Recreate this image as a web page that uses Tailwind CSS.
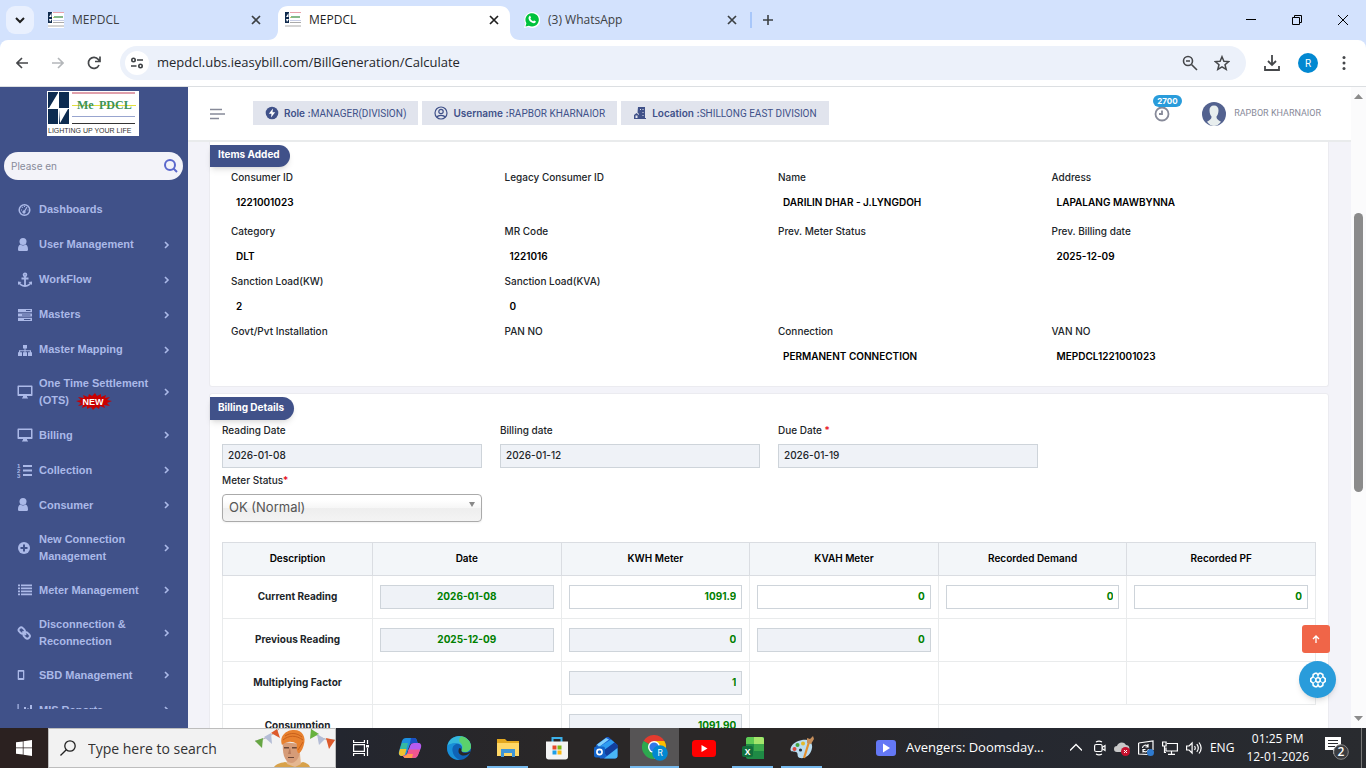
<!DOCTYPE html>
<html lang="en">
<head>
  <meta charset="UTF-8" />
  <meta name="viewport" content="width=device-width, initial-scale=1.0"/>
  <title>MEPDCL</title>
  <script src="https://cdn.jsdelivr.net/npm/@tailwindcss/browser@4"></script>
</head>
<body class="h-screen flex flex-col overflow-hidden bg-white font-['Open_Sans',sans-serif] text-[#1f1f1f]">

  <!-- shared icons -->
  <svg class="hidden">
    <symbol id="chev" viewBox="0 0 6 8"><path d="M1 1l3 3-3 3" fill="none" stroke="currentColor" stroke-width="1.6"/></symbol>
    <symbol id="close" viewBox="0 0 10 10"><path d="M1 1l8 8M9 1L1 9" fill="none" stroke="currentColor" stroke-width="1.7"/></symbol>
    <symbol id="favicon" viewBox="0 0 16 16">
      <path fill="#fff" d="M0 0h16v16H0z"/><path fill="#0f2a4d" d="M0 0h4v11H0z"/><path fill="#fff" d="M3.500 1v4H1zM1 7h3L2 10z"/>
      <path fill="#e9a3ab" d="M5 0h11v1H5z"/><path fill="#86b98a" d="M6 4h9v2H6z"/><path fill="#d9d45a" d="M5 5h1v1H5z"/><path fill="#c9cfe6" d="M5 8h11v1H5z"/><path fill="#aaa" d="M5 10h11v1H5z"/><path fill="#d4d4d4" d="M0 13h16v2H0z"/>
    </symbol>
    <symbol id="user" viewBox="0 0 16 16"><circle cx="6" cy="4.500" r="3.500"/><path d="M1 12.500C1 9.500 2 8 3.500 7.500c1.500 1.200 3.500 1.200 5 0C10 8 11 9.500 11 12.500c0 1-.8 1.500-1.500 1.500h-7C1.800 14 1 13.500 1 12.500z"/></symbol>
    <symbol id="desktop" viewBox="0 0 16 16"><path fill-rule="evenodd" d="M1.500 1.500h13c.8 0 1 .5 1 1v8.500c0 .6-.3 1-1 1H10v1.500h1v1H5v-1h1V12H1.500c-.7 0-1-.4-1-1V2.500c0-.6.3-1 1-1zM2 3v7h12V3z"/></symbol>
  </svg>

  <!-- tab strip -->
  <header class="h-10 shrink-0 flex items-start bg-[#d3e2fd] text-[12px] text-[#3c4043]">
    <button aria-label="Search tabs" class="mt-1.5 ml-1.5 size-7 rounded-[9px] bg-[#e9f0fe] flex items-center justify-center">
      <svg class="w-2.5 h-2" viewBox="0 0 10 8" fill="none" stroke="#1f1f1f" stroke-width="2"><path d="M1 2l4 4 4-4"/></svg>
    </button>
    <div class="ml-3.5 h-10 w-[220px] flex items-center">
      <svg class="size-4"><use href="#favicon"/></svg>
      <span class="ml-2 flex-1">MEPDCL</span>
      <button aria-label="Close tab"><svg class="size-2.5 mr-[7px]"><use href="#close"/></svg></button>
    </div>
    <div class="mt-1.5 h-[34px] w-[252px] flex bg-[linear-gradient(#fff,#fff)] bg-[length:232px_100%] bg-center bg-no-repeat">
      <svg class="self-end size-2.5 shrink-0" viewBox="0 0 10 10"><path fill="#fff" d="M10 0v10H0C6 10 10 6 10 0z"/></svg>
      <svg class="self-start size-2.5 shrink-0" viewBox="0 0 10 10"><path fill="#d3e2fd" d="M0 10V0h10C4 0 0 4 0 10z"/></svg>
      <div class="flex-1 h-7 flex items-center text-[#1f1f1f]">
        <svg class="size-4 -ml-[3px]"><use href="#favicon"/></svg>
        <span class="ml-2 flex-1">MEPDCL</span>
        <button aria-label="Close tab"><svg class="size-2.5 mr-px"><use href="#close"/></svg></button>
      </div>
      <svg class="self-start size-2.5 shrink-0" viewBox="0 0 10 10"><path fill="#d3e2fd" d="M10 10V0H0c6 0 10 4 10 10z"/></svg>
      <svg class="self-end size-2.5 shrink-0" viewBox="0 0 10 10"><path fill="#fff" d="M0 0v10h10C4 10 0 6 0 0z"/></svg>
    </div>
    <div class="ml-1 h-10 w-[220px] flex items-center">
      <svg class="size-4" viewBox="0 0 16 16"><path fill="#fff" d="M0 16l1.200-4.400A8 8 0 1 1 4.500 15z"/><path fill="#00c23c" d="M1.500 14.500l.9-3.200A6.700 6.700 0 1 1 4.900 13.700z"/><path fill="#fff" d="M5.300 4.200c.4-.5.9-.4 1.100 0l.6 1.400c.1.400-.5.8-.6 1.100.6 1.200 1.500 2 2.700 2.500.4-.1.700-.9 1.100-.8l1.500.8c.3.200.1 1-.3 1.400-1 .9-2.300.6-3.600 0C6 9.700 4.900 8.300 4.600 6.800c-.2-1 .1-2 .7-2.600z"/></svg>
      <span class="ml-2 flex-1">(3) WhatsApp</span>
      <button aria-label="Close tab"><svg class="size-2.5 mr-[7px]"><use href="#close"/></svg></button>
    </div>
    <div class="ml-1.5 mt-3 w-0.5 h-4 bg-[#a8c7fa]"></div>
    <button aria-label="New tab" class="ml-2.5 h-10"><svg class="size-3" viewBox="0 0 12 12" stroke="#3c4043" stroke-width="1.600"><path d="M6 1v10M1 6h10"/></svg></button>
    <div class="ml-auto h-10 flex text-black">
      <button aria-label="Minimize" class="w-[46px] flex items-center justify-center"><svg class="size-2.5" viewBox="0 0 10 10" stroke="currentColor"><path d="M0 4.500h10"/></svg></button>
      <button aria-label="Restore" class="w-[46px] flex items-center justify-center"><svg class="size-2.5" viewBox="0 0 10 10" fill="none" stroke="currentColor"><path d="M.5 2.500h7v7h-7zM2.500 2.500v-2h7v7h-2"/></svg></button>
      <button aria-label="Close" class="w-[46px] flex items-center justify-center"><svg class="size-2.5" viewBox="0 0 10 10" stroke="currentColor"><path d="M0 0l10 10M10 0L0 10"/></svg></button>
    </div>
  </header>

  <!-- toolbar -->
  <div class="shrink-0 bg-[#d3e2fd]">
    <div class="h-[47px] flex items-center rounded-t-[8px] bg-white border-b border-[#dcdfe2] text-[#45474a]">
      <button aria-label="Back" class="w-11 flex justify-center"><svg class="size-3" viewBox="0 0 12 12" fill="none" stroke="currentColor" stroke-width="1.600"><path d="M12 6H1.200M6 1L1 6l5 5"/></svg></button>
      <button aria-label="Forward" class="w-7 flex justify-center text-[#b4b7ba]"><svg class="size-3" viewBox="0 0 12 12" fill="none" stroke="currentColor" stroke-width="1.600"><path d="M0 6h10.800M6 1l5 5-5 5"/></svg></button>
      <button aria-label="Reload" class="w-11 flex justify-center"><svg class="size-3.5" viewBox="0 0 14 14" fill="none" stroke="currentColor" stroke-width="1.700"><path d="M12 9A5.500 5.500 0 1 1 11.300 3.500L13 5M13 .5V5.500H8"/></svg></button>
      <div class="ml-1 flex-1 h-[34px] rounded-full bg-[#ecf1fa] flex items-center pl-[5px] pr-4">
        <button aria-label="Site information" class="size-6 rounded-full bg-white flex items-center justify-center"><svg class="size-3" viewBox="0 0 12 12" fill="none" stroke="#3c4043" stroke-width="1.600"><circle cx="2.500" cy="3" r="1.700"/><path d="M6 3h6M0 9h5.500"/><circle cx="9.500" cy="9" r="1.700"/></svg></button>
        <input aria-label="Address" class="ml-2 flex-1 bg-transparent outline-none text-[13px] text-[#24262a]" value="mepdcl.ubs.ieasybill.com/BillGeneration/Calculate" />
        <button aria-label="Zoom"><svg class="size-4" viewBox="0 0 16 16" fill="none" stroke="currentColor" stroke-width="1.600"><circle cx="6" cy="6" r="4.500"/><path d="M9.500 9.500L15 15M4 6h4"/></svg></button>
        <button aria-label="Bookmark" class="ml-4"><svg class="size-4" viewBox="0 0 16 16" fill="none" stroke="currentColor" stroke-width="1.500"><path d="M8 1.700l1.900 4.500 4.800.4-3.700 3.100 1.200 4.700L8 11.900l-4.200 2.500L5 9.700 1.300 6.600l4.800-.4z"/></svg></button>
      </div>
      <button aria-label="Downloads" class="ml-[18px]"><svg class="size-4" viewBox="0 0 16 16" fill="none" stroke="currentColor" stroke-width="1.800"><path d="M8 0v9.500M4 6l4 4 4-4M1 11v4h14v-4"/></svg></button>
      <button aria-label="Profile" class="ml-[18px] size-5 rounded-full bg-[#0288d1] text-[10px] text-white font-['Roboto',sans-serif]">R</button>
      <button aria-label="Menu" class="ml-6 mr-5"><svg class="w-1 h-4" viewBox="0 0 4 16" fill="currentColor"><circle cx="2" cy="2.500" r="1.500"/><circle cx="2" cy="8" r="1.500"/><circle cx="2" cy="13.500" r="1.500"/></svg></button>
    </div>
  </div>

  <!-- web page -->
  <div class="relative flex-1 min-h-0 flex font-['Inter',sans-serif]">

    <aside class="w-[188px] shrink-0 bg-[#405189] flex flex-col pt-1 pb-[19px]">
      <a href="#" class="ml-[47px] w-[92px] h-[45px] shrink-0 bg-white">
        <svg class="w-full h-full" viewBox="0 0 92 45">
          <path fill="#0d2b50" d="M1 1h21v32H1z"/><path fill="#fff" d="M11 2v15H2zM12 18h9L13 32zM1 17h21v1H1z"/><path fill="#fff" d="M11 1h1v32h-1z"/>
          <path fill="#e0a0ac" d="M25 1h63v2H25z"/><path fill="#e2df3c" d="M25 14h64v1H25z"/><path fill="#98a5cf" d="M25 25h63v1H25z"/><path fill="#333" d="M25 32h63v1H25z"/>
          <text x="30" y="18" font-family="Liberation Serif" font-weight="700" font-size="12" fill="#3c9358">Me</text>
          <text x="52" y="18" font-family="Liberation Serif" font-weight="700" font-size="12" fill="#3c9358">PDCL</text>
          <text x="1" y="42" font-family="Liberation Sans" font-size="7" fill="#333">LIGHTING UP YOUR LIFE</text>
        </svg>
      </a>
      <label class="ml-1 mt-4 mr-[5px] h-7 shrink-0 rounded-full bg-[#f3f3f9] flex items-center pl-[7px] pr-[5px]">
        <input aria-label="Search menu" placeholder="Please en" class="min-w-0 flex-1 bg-transparent outline-none text-[10px] placeholder:text-[#878a99]" />
        <svg class="size-3.5" viewBox="0 0 14 14" fill="none" stroke="#5b68cc" stroke-width="2"><circle cx="6" cy="6" r="5"/><path d="M9.500 9.500L13 13"/></svg>
      </label>

      <nav class="mt-3 min-h-0 flex-1 overflow-hidden font-['Liberation_Sans',sans-serif] text-[11px] leading-[17px] font-bold text-[#abb9e8]">
        <a href="#" class="flex items-center min-h-[35px] py-2 pl-[17px]">
          <svg class="size-4" viewBox="0 0 16 16" fill="none" stroke="currentColor"><circle cx="7.500" cy="8" r="5.300" stroke-width="1.500"/><path d="M7 10l3-5M4 8h1M5 5l.7.7M10.500 8h1M7.500 4v1" stroke-width="1.200"/><circle cx="7" cy="10" r="1.200" fill="currentColor"/></svg>
          <span class="ml-1.5 w-[125px]">Dashboards</span>
        </a>
        <a href="#" class="flex items-center min-h-[35px] py-2 pl-[17px]">
          <svg class="size-4" fill="currentColor"><use href="#user"/></svg>
          <span class="ml-1.5 w-[125px]">User Management</span>
          <svg class="w-1.5 h-2"><use href="#chev"/></svg>
        </a>
        <a href="#" class="flex items-center min-h-[35px] py-2 pl-[17px]">
          <svg class="size-4" viewBox="0 0 16 16" fill="none" stroke="currentColor" stroke-width="1.800"><circle cx="8" cy="2.800" r="1.400"/><path d="M8 4v10M4.500 6.500h7M2 10.500c1 2.300 3.500 3.300 6 3.500 2.500-.2 5-1.200 6-3.500"/><path d="M1 13V9.500L4.500 10zM15 13V9.500L11.500 10z" fill="currentColor" stroke="none"/></svg>
          <span class="ml-1.5 w-[125px]">WorkFlow</span>
          <svg class="w-1.5 h-2"><use href="#chev"/></svg>
        </a>
        <a href="#" class="flex items-center min-h-[35px] py-2 pl-[17px]">
          <svg class="size-4" viewBox="0 0 16 16"><path fill="currentColor" d="M1 2h14v3.200H1zM1 6.400h14v3.200H1zM1 10.800h14V14H1z"/><path fill="#405189" d="M9 3h4.500v1H9zM5 7.500h8.500v1H5zM7 12h6.500v1H7z"/></svg>
          <span class="ml-1.5 w-[125px]">Masters</span>
          <svg class="w-1.5 h-2"><use href="#chev"/></svg>
        </a>
        <a href="#" class="flex items-center min-h-[35px] py-2 pl-[17px]">
          <svg class="size-4" viewBox="0 0 16 16" fill="currentColor"><path d="M6 3h4v3.500H8.500V8.200H14v2h1V14h-4v-3.800h1.800V9.300H8.500v.9H10V14H6v-3.800h1.500v-.9H3.200v.9H5V14H1v-3.800h1v-2h5.500V6.500H6z"/></svg>
          <span class="ml-1.5 w-[125px]">Master Mapping</span>
          <svg class="w-1.5 h-2"><use href="#chev"/></svg>
        </a>
        <a href="#" class="flex items-center min-h-[35px] py-2 pl-[17px]">
          <svg class="size-4" fill="currentColor"><use href="#desktop"/></svg>
          <span class="ml-1.5 w-[125px]">One Time Settlement (OTS)
            <svg class="inline w-9 h-[17px] ml-1" viewBox="0 0 36 17"><path fill="#c80000" d="M0 8l5-1-3-3 6 1-1-3 5 2 1-3 3 2 3-3 2 3 4-2v3l5-2-1 3 5-1-3 3 5 1-5 2 3 3-6-1 1 3-5-2-1 3-3-2-3 3-2-3-4 2v-3l-5 2 1-3-5 1 3-3z"/><text x="17" y="11.500" text-anchor="middle" font-size="9" fill="#fff">NEW</text></svg>
          </span>
          <svg class="w-1.5 h-2"><use href="#chev"/></svg>
        </a>
        <a href="#" class="flex items-center min-h-[35px] py-2 pl-[17px]">
          <svg class="size-4" fill="currentColor"><use href="#desktop"/></svg>
          <span class="ml-1.5 w-[125px]">Billing</span>
          <svg class="w-1.5 h-2"><use href="#chev"/></svg>
        </a>
        <a href="#" class="flex items-center min-h-[35px] py-2 pl-[17px]">
          <svg class="size-4" viewBox="0 0 16 16" fill="currentColor"><path d="M6 3h9v2H6zM6 7.500h9v2H6zM6 12h9v2H6z"/><text x="0" y="6" font-size="6">1</text><text x="0" y="11" font-size="6">2</text><text x="0" y="16" font-size="6">3</text></svg>
          <span class="ml-1.5 w-[125px]">Collection</span>
          <svg class="w-1.5 h-2"><use href="#chev"/></svg>
        </a>
        <a href="#" class="flex items-center min-h-[35px] py-2 pl-[17px]">
          <svg class="size-4" fill="currentColor"><use href="#user"/></svg>
          <span class="ml-1.5 w-[125px]">Consumer</span>
          <svg class="w-1.5 h-2"><use href="#chev"/></svg>
        </a>
        <a href="#" class="flex items-center min-h-[35px] py-2 pl-[17px]">
          <svg class="size-4" viewBox="0 0 16 16"><circle cx="7" cy="8" r="6" fill="currentColor"/><path d="M7 4.500v7M3.500 8h7" stroke="#405189" stroke-width="2"/></svg>
          <span class="ml-1.5 w-[125px]">New Connection Management</span>
          <svg class="w-1.5 h-2"><use href="#chev"/></svg>
        </a>
        <a href="#" class="flex items-center min-h-[35px] py-2 pl-[17px]">
          <svg class="size-4" viewBox="0 0 16 16" fill="currentColor"><path d="M1 2.500h2v1.700H1zM4 2.500h11v1.700H4zM1 5.500h2v1.700H1zM4 5.500h11v1.700H4zM1 8.500h2v1.700H1zM4 8.500h11v1.700H4zM1 11.500h2v1.700H1zM4 11.500h11v1.700H4z"/></svg>
          <span class="ml-1.5 w-[125px]">Meter Management</span>
          <svg class="w-1.5 h-2"><use href="#chev"/></svg>
        </a>
        <a href="#" class="flex items-center min-h-[35px] py-2 pl-[17px]">
          <svg class="size-4" viewBox="0 0 16 16" fill="none" stroke="currentColor" stroke-width="1.900"><rect x="1.500" y="3" width="6.500" height="5" rx="2.300" transform="rotate(45 4.700 5.500)"/><rect x="6.500" y="8" width="6.500" height="5" rx="2.300" transform="rotate(45 9.700 10.500)"/><path d="M5.500 6.300l3.500 3.500"/></svg>
          <span class="ml-1.5 w-[125px]">Disconnection &amp; Reconnection</span>
          <svg class="w-1.5 h-2"><use href="#chev"/></svg>
        </a>
        <a href="#" class="flex items-center min-h-[35px] py-2 pl-[17px]">
          <svg class="size-4" viewBox="0 0 16 16" fill="currentColor"><path fill-rule="evenodd" d="M1.500 3h5c.5 0 .8.300.8.800v8.400c0 .5-.3.800-.8.800h-5c-.5 0-.8-.3-.8-.8V3.800c0-.5.300-.8.800-.8zM2 4.700v6.300h4V4.700z"/></svg>
          <span class="ml-1.5 w-[125px]">SBD Management</span>
          <svg class="w-1.5 h-2"><use href="#chev"/></svg>
        </a>
        <a href="#" class="flex items-center min-h-[35px] py-2 pl-[17px]">
          <svg class="size-4" viewBox="0 0 16 16" fill="currentColor"><path d="M.5 2h1.200v11H16v1.200H.5zM4 8h2v4H4zM7 5h2v7H7zM10 6.500h2V12h-2zM13 3h2v9h-2z"/></svg>
          <span class="ml-1.5 w-[125px]">MIS Reports</span>
          <svg class="w-1.5 h-2"><use href="#chev"/></svg>
        </a>
      </nav>
    </aside>

    <div class="flex-1 min-w-0 flex flex-col bg-[#f3f3f9]">
      <div class="h-[55px] shrink-0 flex items-center bg-white border-b-2 border-[#e9ebec] pl-[22px] pr-[30px] font-['Roboto',sans-serif] text-[10px] text-[#405189]">
        <button aria-label="Toggle menu"><svg class="w-[15px] h-3" viewBox="0 0 15 12" stroke="#878a99" stroke-width="1.300"><path d="M0 1.500h12M0 6h15M0 10.500h9"/></svg></button>
        <div class="ml-7 flex gap-1 h-[25px] pb-px">
          <div class="flex items-center bg-[#e1e4ed] px-3">
            <svg class="size-3.5 mr-[5px]" viewBox="0 0 14 14"><circle cx="7" cy="7" r="6.300" fill="currentColor"/><path fill="#fff" d="M8 2.500L3.800 7.800h2.700L6 11.500l4.200-5.300H7.500z"/></svg>
            <b class="font-['Inter',sans-serif] font-semibold">Role :</b>MANAGER(DIVISION)
          </div>
          <div class="flex items-center bg-[#e1e4ed] px-3">
            <svg class="size-3.5 mr-[5px]" viewBox="0 0 14 14" fill="none" stroke="currentColor" stroke-width="1.200"><circle cx="7" cy="7" r="6"/><circle cx="7" cy="5.500" r="2.200"/><path d="M3 11.300c1-2.600 7-2.600 8 0"/></svg>
            <b class="font-['Inter',sans-serif] font-semibold">Username :</b>RAPBOR KHARNAIOR
          </div>
          <div class="flex items-center bg-[#e1e4ed] px-3">
            <svg class="size-3.5 mr-[5px]" viewBox="0 0 14 14"><path fill="currentColor" d="M5 1h7v12H6V8L4.500 6.500zM13 12v1H1v-1zM1 13V9l2.500-2L6 9v4z"/><path fill="#e1e4ed" d="M7 3h1v1H7zM9.500 3h1v1h-1zM9.500 6h1v1h-1zM9.500 9h1v1h-1zM2.500 9.500h2V12h-2z"/></svg>
            <b class="font-['Inter',sans-serif] font-semibold">Location :</b>SHILLONG EAST DIVISION
          </div>
        </div>
        <button aria-label="Notifications" class="ml-auto relative mr-8 text-[#878a99]">
          <svg class="size-4" viewBox="0 0 16 16" fill="none" stroke="currentColor" stroke-width="1.800"><circle cx="8" cy="8" r="6.500"/><path d="M8 4.500V8H5"/></svg>
          <span class="absolute -top-[11px] -left-px h-3 px-1 rounded-full bg-[#299cdb] text-white font-['Inter',sans-serif] text-[8px] leading-3 font-bold">2700</span>
        </button>
        <svg class="size-6" viewBox="0 0 24 24"><circle cx="12" cy="12" r="12" fill="#53628f"/><path fill="#e8eeee" d="M12 3.500c3 0 4.700 2 4.500 5-.1 3-1 5-2 6 0 2 .5 3 4.500 5.200C17 22.500 14.500 24 12 24s-5-1.500-7-4.300c4-2.200 4.500-3.200 4.500-5.200-1-1-1.900-3-2-6-.2-3 1.500-5 4.500-5z"/></svg>
        <span class="ml-2 text-[9px] text-[#878a99]">RAPBOR KHARNAIOR</span>
      </div>

      <main class="flex-1 min-h-0 overflow-hidden pl-[21px] pr-[22px] text-[10px] leading-4 text-[#212529]">
        <section class="h-[245px] bg-white border border-t-0 border-[#ebebf0] rounded-b-[3px] pt-[3px]">
          <h2 class="w-max h-[22px] px-2 pr-2.5 rounded-r-full bg-[#405189] text-white font-bold leading-[19px] shadow-md">Items Added</h2>
          <div class="mx-3 mt-0.5 grid grid-cols-4 gap-y-[9px] font-medium [&>div]:pl-[9px] [&_p]:h-4 [&_p]:mt-[9px] [&_p]:pl-[5px] [&_p]:font-semibold [&_p]:text-black">
            <div class="mb-1">Consumer ID<p>1221001023</p></div>
            <div class="mb-1">Legacy Consumer ID<p></p></div>
            <div class="mb-1">Name<p>DARILIN DHAR - J.LYNGDOH</p></div>
            <div class="mb-1">Address<p>LAPALANG MAWBYNNA</p></div>
            <div>Category<p>DLT</p></div>
            <div>MR Code<p>1221016</p></div>
            <div>Prev. Meter Status<p></p></div>
            <div>Prev. Billing date<p>2025-12-09</p></div>
            <div>Sanction Load(KW)<p>2</p></div>
            <div>Sanction Load(KVA)<p>0</p></div>
            <div></div>
            <div></div>
            <div>Govt/Pvt Installation<p></p></div>
            <div>PAN NO<p></p></div>
            <div>Connection<p>PERMANENT CONNECTION</p></div>
            <div>VAN NO<p>MEPDCL1221001023</p></div>
          </div>
        </section>

        <section class="mt-1.5 bg-white border border-[#ebebf0] rounded-[3px] pt-[3px]">
          <h2 class="w-max h-[23px] px-2 pr-2.5 rounded-r-full bg-[#405189] text-white font-bold leading-[21px] shadow-md">Billing Details</h2>
          <div class="mx-3 mt-0.5 grid grid-cols-4 gap-x-[18px] gap-y-1 font-medium [&_label]:block [&_label]:mb-1.5 [&_input]:block [&_input]:w-full [&_input]:h-6 [&_input]:px-[5px] [&_input]:pb-0.5 [&_input]:border [&_input]:border-[#ced4da] [&_input]:bg-[#eff2f7]">
            <div><label for="readingDate">Reading Date</label><input id="readingDate" value="2026-01-08" readonly /></div>
            <div><label for="billingDate">Billing date</label><input id="billingDate" value="2026-01-12" readonly /></div>
            <div><label for="dueDate">Due Date <span class="text-red-600">*</span></label><input id="dueDate" value="2026-01-19" readonly /></div>
            <div class="col-start-1">
              <label for="meterStatus">Meter Status<span class="text-red-600">*</span></label>
              <div class="relative">
                <select id="meterStatus" class="appearance-none w-full h-7 pl-1.5 pb-0.5 rounded-[4px] border border-[#aaa] bg-[linear-gradient(#fff_20%,#f6f6f6_50%,#eee_52%,#f4f4f4)] shadow-xs font-normal text-[13px] text-[#555]">
                  <option>OK (Normal)</option>
                </select>
                <svg class="absolute right-[7px] top-2 w-1.5 h-[5px] pointer-events-none" viewBox="0 0 6 5"><path fill="#888" d="M0 0h6L3 5z"/></svg>
              </div>
            </div>
          </div>

          <div class="mx-3 mt-5">
            <table class="w-full table-fixed border-collapse text-center [&_th]:border [&_th]:pb-0.5 [&_td]:border [&_td]:border-[#e9ebec] [&_td]:px-[7px] [&_tbody_tr]:h-[43px] [&_tbody_th]:border-[#e9ebec] [&_tbody_th]:font-bold [&_input]:block [&_input]:w-full [&_input]:h-6 [&_input]:px-[5px] [&_input]:pb-0.5 [&_input]:border [&_input]:border-[#ced4da] [&_input]:text-right [&_input]:font-bold [&_input]:text-[#008000] [&_input]:read-only:bg-[#eff2f7]">
              <thead>
                <tr class="h-[33px] bg-[#f3f6f9] text-black [&_th]:border-[#dadde2] [&_th]:font-semibold">
                  <th class="w-[150px]">Description</th>
                  <th>Date</th>
                  <th>KWH Meter</th>
                  <th>KVAH Meter</th>
                  <th>Recorded Demand</th>
                  <th>Recorded PF</th>
                </tr>
              </thead>
              <tbody>
                <tr>
                  <th>Current Reading</th>
                  <td><input aria-label="Current date" class="!text-center" value="2026-01-08" readonly /></td>
                  <td><input aria-label="Current KWH" value="1091.9" /></td>
                  <td><input aria-label="Current KVAH" value="0" /></td>
                  <td><input aria-label="Recorded demand" value="0" /></td>
                  <td><input aria-label="Recorded PF" value="0" /></td>
                </tr>
                <tr>
                  <th>Previous Reading</th>
                  <td><input aria-label="Previous date" class="!text-center" value="2025-12-09" readonly /></td>
                  <td><input aria-label="Previous KWH" value="0" readonly /></td>
                  <td><input aria-label="Previous KVAH" value="0" readonly /></td>
                  <td></td>
                  <td></td>
                </tr>
                <tr>
                  <th>Multiplying Factor</th>
                  <td></td>
                  <td><input aria-label="Multiplying factor" value="1" readonly /></td>
                  <td></td>
                  <td></td>
                  <td></td>
                </tr>
                <tr>
                  <th>Consumption</th>
                  <td></td>
                  <td><input aria-label="Consumption KWH" value="1091.90" readonly /></td>
                  <td></td>
                </tr>
              </tbody>
            </table>
          </div>
        </section>
      </main>
    </div>

    <!-- scrollbar -->
    <div class="w-[15px] shrink-0 bg-[#fbfbfc] flex flex-col items-center py-[7px]">
      <svg class="w-[9px] h-[5px]" viewBox="0 0 9 5"><path fill="#8b8b8b" d="M4.500 0L9 5H0z"/></svg>
      <div class="grow-[114]"></div>
      <div class="grow-[279] w-[9px] rounded-full bg-[#8b8b8b]"></div>
      <div class="grow-[224]"></div>
      <svg class="w-[9px] h-[5px]" viewBox="0 0 9 5"><path fill="#8b8b8b" d="M0 0h9L4.500 5z"/></svg>
    </div>

    <!-- floating buttons -->
    <div class="absolute right-[30px] bottom-[30px] flex flex-col items-end gap-2">
      <button aria-label="Back to top" class="mr-1.5 size-7 rounded-[3px] bg-[#f06548] flex items-center justify-center"><svg class="size-2" viewBox="0 0 8 8" fill="none" stroke="#fff" stroke-width="1.300"><path d="M4 8V1M1 4l3-3 3 3"/></svg></button>
      <button aria-label="Settings" class="size-[37px] rounded-full bg-[#299cdb] shadow-md flex items-center justify-center">
        <svg class="size-4" viewBox="0 0 16 16" fill="none" stroke="#fff" stroke-width="1.600"><path d="M5.200 1.300h1.500L8 3l1.300-1.700h1.500l2 1.200.2 2.300 2.200 1.800v2.800L13 11.200l-.2 2.300-2 1.200H9.300L8 13l-1.300 1.700H5.200l-2-1.200-.2-2.300L.8 9.400V6.600L3 4.800l.2-2.300z"/><circle cx="8" cy="8" r="2.200"/><path d="M8 3v3M8 10v3M3 4.800L6 7M10 9l3 2.200M13 4.800L10 7M6 9l-3 2.200" stroke-width="1"/></svg>
      </button>
    </div>
  </div>

  <!-- taskbar -->
  <footer class="h-10 shrink-0 flex bg-[linear-gradient(90deg,#2b2120_0,#2b2120_48px,#23262f_340px,#2a2727_560px,#2a2727_800px,#252830_1000px,#292b2f_1366px)] text-white">
    <button aria-label="Start" class="w-12 flex items-center justify-center"><svg class="size-4" viewBox="0 0 16 16" fill="#fff"><path d="M0 2.300L6.800 1.400V7.600H0zM7.500 1.300L16 0v7.600H7.500zM0 8.300h6.800v6.300L0 13.700zM7.500 8.300H16V16l-8.500-1.300z"/></svg></button>
    <label class="w-72 flex items-center bg-[#f2f2f2] border border-[#bdbdbd] pl-[11px]">
      <svg class="size-4" viewBox="0 0 16 16" fill="none" stroke="#222" stroke-width="1.300"><circle cx="10" cy="6" r="5.200"/><path d="M6.300 9.700L.5 15.500"/></svg>
      <input placeholder="Type here to search" aria-label="Search" class="ml-3 w-[150px] bg-transparent outline-none text-[14px] placeholder:text-[#333]" />
      <svg class="ml-[17px] w-20 h-[38px]" viewBox="0 0 80 38">
        <path d="M0 12Q14 10 24 0M56 0Q64 12 80 11" fill="none" stroke="#999" stroke-width=".7"/>
        <path fill="#67a644" d="M0 12l8-3-1 10z"/><path fill="#b4bdd6" d="M9 8l7-4 1 11z"/><path fill="#dd5a2b" d="M16 4l6-4 3 9z"/><path fill="#67b23e" d="M56 0l8 5-9 5z"/><path fill="#b4bdd6" d="M62 5l8 5-6 6z"/><path fill="#dd5a2b" d="M71 9l9 2-6 9z"/>
        <path fill="#d8a24a" d="M19 38c3-4 7-4 11-5l10 3 8-3c3 1 6 2 7 5z"/><path fill="#e5b791" d="M31 25h14l1 10-6 3-8-3z"/>
        <path fill="#d69c78" d="M28 13c-1 10 1 20 8 21 6 0 10-8 10-19z"/><path fill="#6b4738" d="M29 18h5v1.500h-5zM37 18h6v1.500h-6zM33 28h6v1h-6z"/><path fill="#b97c5d" d="M35 18l-2 7h3z"/>
        <path fill="#e8812f" d="M27 16C24 7 31 1 39 1c9 0 12 8 10 14-1 5-4 10-6 9-2-4-1-6-1-9-5-3-10-3-15 1z"/><path d="M28 11c6-5 13-5 20 0M30 7c6-4 12-3 17 1M43 21l5-8" stroke="#c9601c" fill="none"/>
      </svg>
    </label>
    <div class="flex [&>button]:flex [&>button]:items-center [&>button]:justify-center [&>button]:w-[49px] [&>button]:border-b-2 [&>button]:border-transparent [&>button]:pt-0.5">
      <button aria-label="Task view"><svg class="size-4" viewBox="0 0 16 16" fill="none" stroke="#fff" stroke-width="1.200"><path d="M.6 0v2.500h10.800V0M.6 16v-2.500h10.800V16M.6 4.600h10.800v6.800H.6zM14.500 0v4M14.500 8v8"/><path d="M13 5h3v2.500h-3z" fill="#fff" stroke="none"/></svg></button>
      <button aria-label="Copilot"><svg class="size-6" viewBox="0 0 24 24"><path fill="#1d8fe0" d="M8 2h8c2 0 2.500 1 3 3l.7 2H15c-2 0-3 1-3.700 3L9 17c-.7 2-1.500 3-3.500 3H4c-3 0-3.700-2-2.900-5L4 5c.8-2 2-3 4-3z"/><path fill="#35b9a0" d="M4 7h6L8.500 13H2z"/><path fill="#f0c22f" d="M2 13h6.500l-1.300 5c-.4 1-1 2-2 2H4c-2.700 0-3.500-2-2.900-4z"/><path fill="#1a4fc4" d="M13 2h3c2 0 2.500 1 3 3l.7 2H15c-2 0-3 1-3.500 2z"/><path fill="#b45cf0" d="M16 22H8c-2 0-2.500-1-3-3l1 1c2 0 3-1 3.600-3L12 10c.6-2 2-3 4-3h4c3 0 3.700 2 2.900 5L20 19c-.8 2-2 3-4 3z"/><path fill="#f0568f" d="M9.500 17l.9-3.500H22L20 19c-.8 2-2 3-4 3H8c-2 0-2.500-1-3-3 2 1 3.700 0 4.500-2z"/><path fill="#ff9a50" d="M9 18h6l-1 4H8c-1.500 0-2.300-.7-2.700-2C7 20.200 8 19.600 9 18z"/></svg></button>
      <button aria-label="Edge"><svg class="size-6" viewBox="0 0 24 24"><circle cx="12" cy="12" r="12" fill="#0f63b6"/><path fill="#35b8dc" d="M.3 10C1.500 3.500 7 0 12 0c7 0 12 5 12 10.500C24 14 21 16 18 16c-2.500 0-4-1-3.500-2C16 12 15 8 10 7.500 5 7 1.500 9 .3 10z"/><path fill="#5bd16c" d="M14 .2c6 1 10 5.300 10 10.300C24 14 21 16 18 16c-2.500 0-4-1-3.500-2 2-3 1-6-2-8C12 4 12 2 14 .2z"/><path fill="#1990d8" d="M.3 10C2 7.800 6 6.800 10 7.500 6 9 5 12 5.500 15c.5 4 3 7 7 9C4 24-1 17 .3 10z"/><path fill="#2a2727" d="M14.500 14c-.8 1.500 1.500 3.400 5 2.800 1.500-.3 2.800-.8 3.500-1.200l.3 1c-1.500 2-6 4-9.300 2.400-3-1.500-3-5-1.500-7 1.500.3 2 1.300 2 2z"/></svg></button>
      <button aria-label="File Explorer" class="!border-[#76b9ed] !w-[41px] mx-1"><svg class="w-[22px] h-5" viewBox="0 0 22 20"><path fill="#e3a81f" d="M0 1h8l2 2h12v6H0z"/><path fill="#ffd766" d="M0 5h22v13H0z"/><path fill="#3f95d6" d="M4 11h14v8h-3v-4H7v4H4z"/></svg></button>
      <button aria-label="Store"><svg class="size-6" viewBox="0 0 24 24"><path d="M7.500 6V2h9v4" fill="none" stroke="#3cb1ea" stroke-width="2"/><path fill="#f4f4f4" d="M1 5.500h22V21c0 1.500-1 2.500-2.500 2.500h-17C2 23.500 1 22.500 1 21z"/><path fill="#e84a2a" d="M7.500 9.500h4v4h-4z"/><path fill="#7fb813" d="M12.500 9.500h4v4h-4z"/><path fill="#1e9fe8" d="M7.500 14.500h4v4h-4z"/><path fill="#fbb813" d="M12.500 14.500h4v4h-4z"/></svg></button>
      <button aria-label="Outlook"><svg class="size-6" viewBox="0 0 24 24"><path fill="#1a5fd0" d="M2 9L12 1.500c1-.6 2-.6 3 0L23.500 9v11c0 1.500-1 2.500-2.500 2.500H6z"/><path fill="#7fd0fb" d="M3 8.500L12 2l3 1.500L5 11z"/><path fill="#2e9cf0" d="M5 11L17 3.500l3.500 3L9 15z"/><path fill="#123f9e" d="M9 15L20.500 6.500 23.500 9v3L13 20z"/><path fill="#49b6f6" d="M10 22.500L23.500 12v8c0 1.500-1 2.500-2.500 2.500z"/><rect x="0" y="10.500" width="11" height="11" rx="2" fill="#1263c8"/><circle cx="5.500" cy="16" r="2.600" fill="none" stroke="#fff" stroke-width="1.600"/></svg></button>
      <button aria-label="Chrome" class="!border-[#76b9ed] bg-[#565455]"><svg class="size-[26px]" viewBox="0 0 26 26"><path fill="#e33b2e" d="M12 12L1.600 6A12 12 0 0 1 22.400 6z"/><path fill="#2da94f" d="M12 12L1.600 6A12 12 0 0 0 12 24l4-8z"/><path fill="#fdbd00" d="M12 6h10.400A12 12 0 0 1 12 24l5-9z"/><circle cx="12" cy="12" r="6" fill="#fff"/><circle cx="12" cy="12" r="4.600" fill="#3079e8"/><circle cx="18" cy="18" r="7.800" fill="#0288d1"/><text x="18" y="21" font-family="Roboto" font-size="8.500" text-anchor="middle" fill="#fff">R</text></svg></button>
      <button aria-label="YouTube"><svg class="w-6 h-[17px]" viewBox="0 0 24 17"><rect width="24" height="17" rx="3.500" fill="#f00"/><path fill="#fff" d="M9.500 5v7l6-3.500z"/></svg></button>
      <button aria-label="Excel" class="!border-[#76b9ed] !w-[41px] mx-1"><svg class="size-[22px]" viewBox="0 0 22 22"><path fill="#1f8a45" d="M4 2c0-1 .8-2 2-2h16v22H6c-1.200 0-2-1-2-2z"/><path fill="#5ecb54" d="M6 0h6v7H4V2c0-1 1-2 2-2z"/><path fill="#a5e66c" d="M12 0h8c1 0 2 1 2 2v5H12z"/><path fill="#3da94b" d="M12 7h10v7H12z"/><rect y="9" width="11" height="11" rx="2" fill="#126e3b"/><text x="5.500" y="17.500" font-size="8.500" font-weight="700" text-anchor="middle" fill="#fff">X</text></svg></button>
      <button aria-label="Paint" class="!border-[#76b9ed] !w-[41px] mx-1"><svg class="size-6" viewBox="0 0 24 24"><path fill="#b9dcf0" d="M12 4c6-1.500 11 2 10 8-1 7-7 11-12 10-4-1-1-5-4-6S-.5 16 .7 12C2 7.500 7 5 12 4z"/><circle cx="4.500" cy="13" r="2" fill="#dc4b3e"/><circle cx="7.500" cy="9" r="2" fill="#44a340"/><circle cx="13" cy="7.500" r="2" fill="#e3b92a"/><circle cx="10.500" cy="14" r="1.600" fill="#27303a"/><path stroke="#e48f2d" stroke-width="2.200" d="M19 6l-5 16"/><path fill="#c58e5b" d="M17 2l3 1 3-3 1 3-3 5-4-1z"/></svg></button>
    </div>
    <button class="ml-auto flex items-center gap-2.5 text-[13px]">
      <svg class="w-5 h-4" viewBox="0 0 20 16"><rect width="20" height="16" rx="3" fill="#6478f5"/><path fill="#fff" d="M7 3.500v9l7-4.500z"/></svg>
      Avengers: Doomsday...
    </button>
    <div class="ml-[26px] flex items-center gap-2 text-[12px]">
      <svg class="w-3 h-4" viewBox="0 0 12 16" fill="none" stroke="#fff" stroke-width="1.300"><path d="M0 10.500l6-6 6 6"/></svg>
      <svg class="ml-1 w-3 h-4" viewBox="0 0 12 16" fill="none" stroke="#fff" stroke-width="1.200"><rect x=".6" y="4.500" width="7.500" height="7" rx="1.500"/><path d="M8 7.500l3-2v5l-3-2M2 2Q5 .3 8 2M2 14q3 1.700 6 0"/></svg>
      <svg class="w-4 h-4" viewBox="0 0 16 16"><path fill="#c8c8c8" d="M3 12a3 3 0 0 1 0-6c1-4 7-5 9-1 3 0 4 3 3 5s-3 2-4 2z"/><circle cx="11.500" cy="11.500" r="4.500" fill="#c8102e"/><path d="M10 10l3 3M13 10l-3 3" stroke="#fff"/></svg>
      <svg class="w-4 h-4" viewBox="0 0 16 16" fill="none" stroke="#fff" stroke-width="1.200"><path d="M.6 3L15 1v9M.6 3v11l9 .5"/><path d="M4.500 8a3 3 0 0 1 5.500-1.500M10 4v3H7.500M10.500 9A3 3 0 0 1 5 10.500M5 12.500v-3h2.500"/><circle cx="12.500" cy="12.500" r="3.500" fill="#2f7bd0" stroke="none"/></svg>
      <svg class="w-4 h-4" viewBox="0 0 16 16" fill="none" stroke="#fff" stroke-width="1.200"><path d="M5 3.500h10.400v7.500H4V7.500M9.500 11v3M6 14.400h7M.6 2h3.500v4H.6zM2.500 6v6.500H4"/></svg>
      <svg class="w-4 h-4" viewBox="0 0 16 16" fill="none" stroke="#fff" stroke-width="1.200"><path d="M.6 6h2.500l3-3v10l-3-3H.6zM8.500 6q1.500 2 0 4M10.800 4.200q3 3.800 0 7.600M13 2.500q4.300 5.500 0 11"/></svg>
      <span>ENG</span>
      <div class="ml-1 text-center leading-[18px]">01:25 PM<br>12-01-2026</div>
      <button aria-label="Notifications" class="ml-2 mr-0.5"><svg class="size-6" viewBox="0 0 24 24"><path fill="#fff" d="M0 1h16v13h-3l-5 4v-4H0z"/><path d="M3 4.500h10M3 7.500h10M3 10.500h7" stroke="#292b2f" stroke-width="1.200"/><circle cx="16" cy="16" r="7.300" fill="#3a3c40" stroke="#888"/><text x="16" y="20" font-size="12" font-weight="600" text-anchor="middle" fill="#fff">2</text></svg></button>
      <div class="ml-0.5 mr-1 w-px h-10 bg-[#777]"></div>
    </div>
  </footer>
</body>
</html>
